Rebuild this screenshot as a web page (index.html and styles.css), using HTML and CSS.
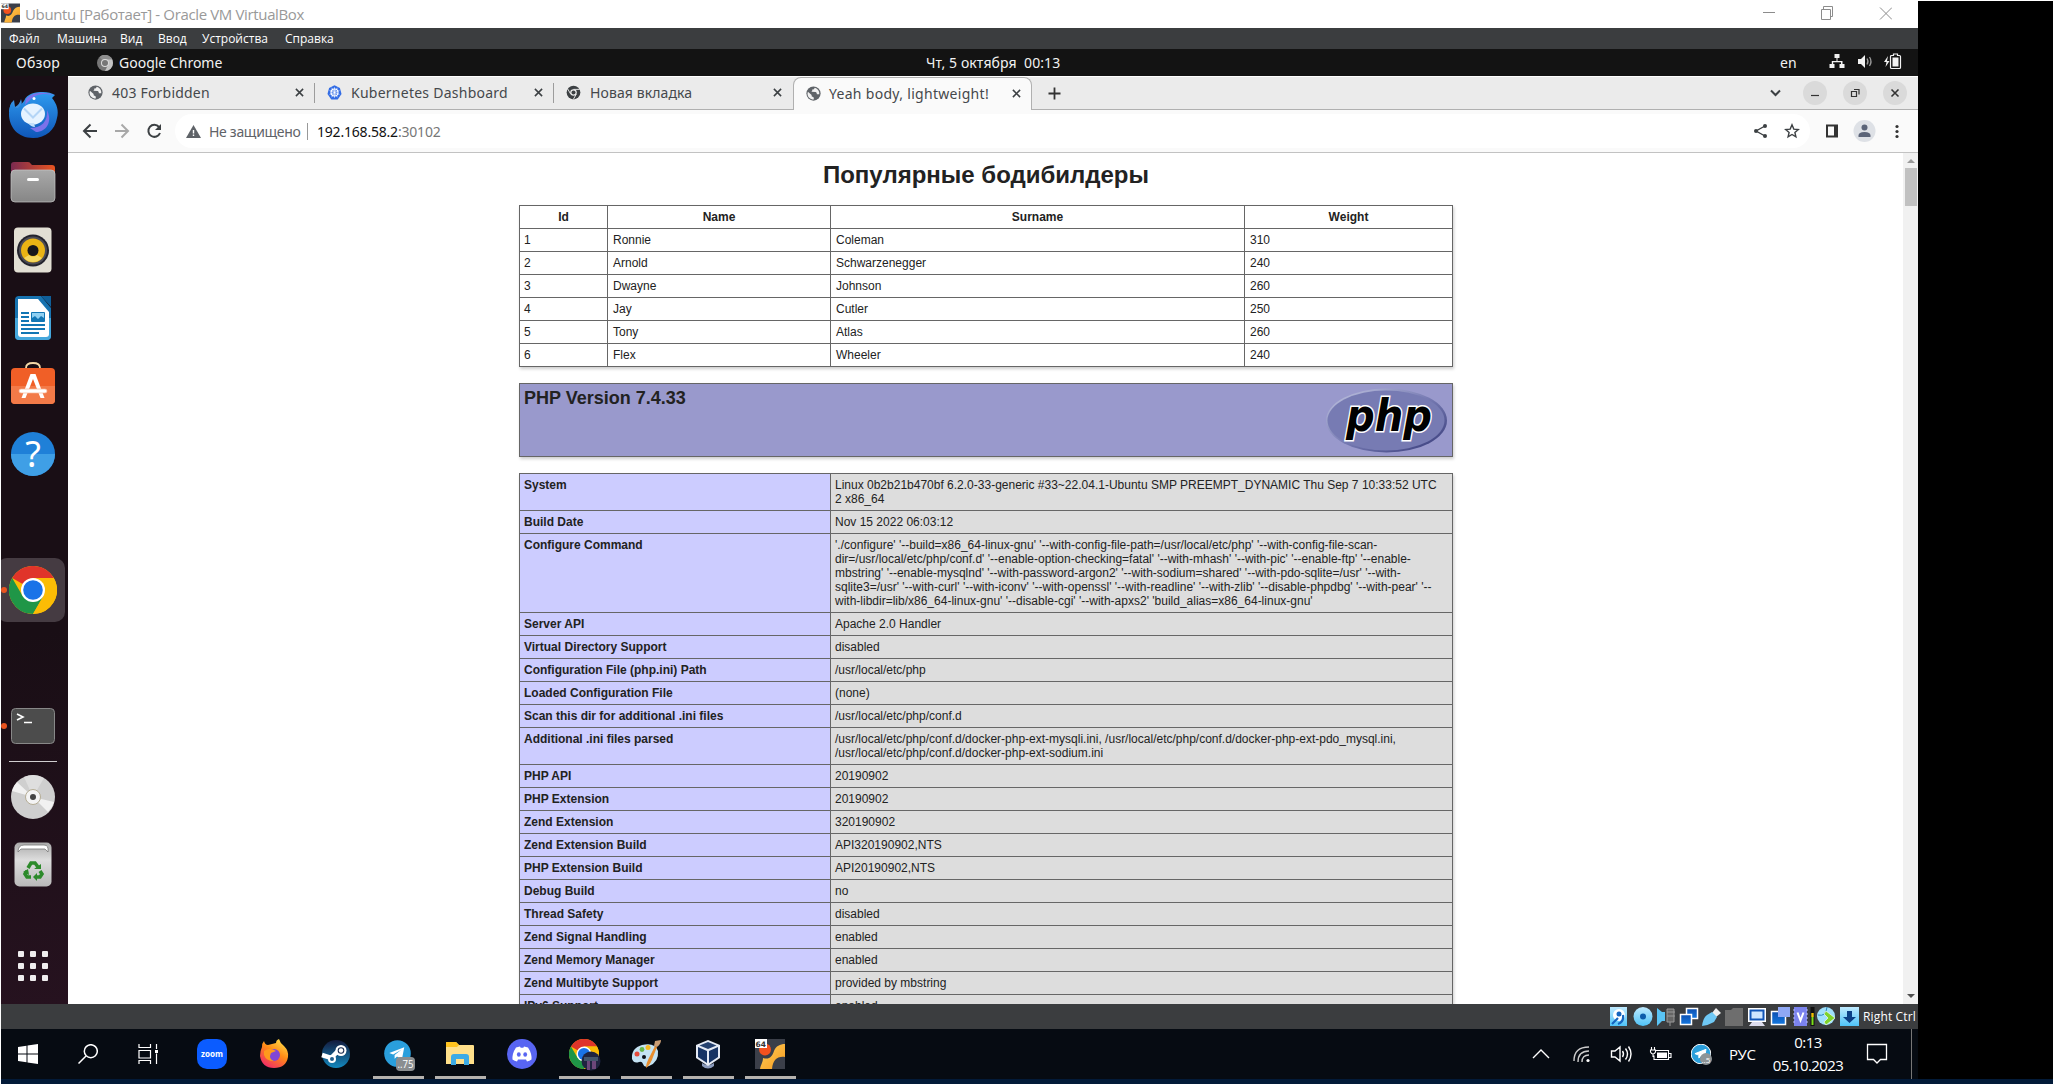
FILE: index.html
```html
<!DOCTYPE html>
<html lang="ru">
<head>
<meta charset="utf-8">
<title>Ubuntu [Работает] - Oracle VM VirtualBox</title>
<link rel="stylesheet" href="styles.css">
</head>
<body>
<svg class="defs" width="0" height="0">
  <defs>
    <linearGradient id="gBlue" x1="0" y1="0" x2="0" y2="1"><stop offset="0" stop-color="#2f9cf0"/><stop offset="1" stop-color="#0f56b8"/></linearGradient>
    <linearGradient id="gGrey" x1="0" y1="0" x2="0" y2="1"><stop offset="0" stop-color="#a9a9a9"/><stop offset="1" stop-color="#868686"/></linearGradient>
    <linearGradient id="gFold" x1="0" y1="0" x2="1" y2="0"><stop offset="0" stop-color="#7a2a50"/><stop offset="1" stop-color="#e95420"/></linearGradient>
    <linearGradient id="gTrash" x1="0" y1="0" x2="0" y2="1"><stop offset="0" stop-color="#aaa"/><stop offset="0.4" stop-color="#ddd"/><stop offset="1" stop-color="#b9b9b9"/></linearGradient>
    <linearGradient id="gFire" x1="0.8" y1="0" x2="0.2" y2="1"><stop offset="0" stop-color="#ffe14a"/><stop offset="0.45" stop-color="#ff8a16"/><stop offset="1" stop-color="#f0246e"/></linearGradient>
    <linearGradient id="gSteam" x1="0" y1="0" x2="0" y2="1"><stop offset="0" stop-color="#141a3c"/><stop offset="1" stop-color="#1389bf"/></linearGradient>
    <linearGradient id="gVb" x1="0" y1="0" x2="0" y2="1"><stop offset="0" stop-color="#bfeaff"/><stop offset="1" stop-color="#4fc3f7"/></linearGradient>
    <linearGradient id="gNet" x1="0" y1="0" x2="0" y2="1"><stop offset="0" stop-color="#0d4fb0"/><stop offset="1" stop-color="#1478e0"/></linearGradient>
    <linearGradient id="gOr" x1="0" y1="0" x2="1" y2="1"><stop offset="0" stop-color="#ffcf5a"/><stop offset="1" stop-color="#f79a1e"/></linearGradient>
    <linearGradient id="gRim" x1="0" y1="0" x2="1" y2="1"><stop offset="0.15" stop-color="#aeb2d5"/><stop offset="0.5" stop-color="#777bb3"/><stop offset="0.85" stop-color="#484c89"/></linearGradient>
    <symbol id="globe" viewBox="0 0 16 16"><circle cx="8" cy="8" r="7.6" fill="#5f6368"/><path d="M2 6.2 6 9.5v1.3l2.3 1.5v2.2C4.5 14.6 1.6 11.700 1.600 8zM9.500 1.800 8 3.600H6.600v1.700l-1 .8 4.800.2c1 .3 1.200 1.700 1.200 2.500h2.600c.3-3.400-1.600-6-4.700-7z" fill="#f1f1f1"/></symbol>
    <symbol id="chrome" viewBox="0 0 48 48"><circle cx="24" cy="24" r="24" fill="#fbbc05"/><path d="M24 24 3.200 12A24 24 0 0 1 44.800 12H24z" fill="#e0342a"/><path d="M24 48A24 24 0 0 1 3.200 12L13.600 30 24 36l10.400-6z" fill="#1f9647"/><path d="M44.800 12A24 24 0 0 1 24 48l10.400-18L36 18 24 12z" fill="#fbbc05"/><circle cx="24" cy="24" r="12" fill="#fff"/><circle cx="24" cy="24" r="9.800" fill="#1a73e8"/></symbol>
    <symbol id="chromeGrey" viewBox="0 0 48 48"><circle cx="24" cy="24" r="22" fill="currentColor"/><path d="M24 14h20M15 29 5 12M33 29 23 47" stroke="#ebebeb" stroke-width="3"/><circle cx="24" cy="24" r="10.500" fill="#ebebeb"/><circle cx="24" cy="24" r="6.500" fill="currentColor"/></symbol>
    <symbol id="close" viewBox="0 0 10 10"><path d="M1 1l8 8M9 1 1 9" stroke="#3c4043" stroke-width="1.700"/></symbol>
    <symbol id="vm64" viewBox="0 0 30 30"><path d="M0 0h30v30H0z" fill="#3b3f49"/><path d="M30 5v13C22 17 18 21 17 30H5C6 25 8 23 8 19c6 2 9-1 11-7 2-5 6-7 11-7z" fill="url(#gOr)"/><circle cx="10" cy="10.500" r="6" fill="#f4511e"/><path d="M0 0h12v9H0z" fill="#fff"/><text x="0.600" y="7.500" class="t64">64</text></symbol>
    <symbol id="plane" viewBox="0 0 28 28"><circle cx="14" cy="14" r="13.800" fill="#2a9fdc"/><path d="M5.500 13.500 21 7.500l-2.500 13-5-3.500-2.500 2.500v-4l7-5.500-8.500 5z" fill="#fff"/></symbol>
  </defs>
</svg>

<div class="screen">
  <div class="vm">
    <header class="titlebar">
      <svg class="app" width="19" height="20"><use href="#vm64"/></svg>
      <span class="wtitle">Ubuntu [Работает] - Oracle VM VirtualBox</span>
      <svg class="winbtns" width="130" height="20" viewBox="0 0 130 20" fill="none" stroke="#8c8c8c"><path d="M1 9.500h12"/><path d="M59.500 6.500h9v10h-9zM61.500 6v-2.500h9v10h-2"/><path d="M118 4.500l12 12M130 4.500l-12 12"/></svg>
    </header>
    <nav class="menubar"><span class="m1">Файл</span><span class="m2">Машина</span><span class="m3">Вид</span><span class="m4">Ввод</span><span class="m5">Устройства</span><span class="m6">Справка</span></nav>

    <div class="topbar">
      <span class="ov">Обзор</span>
      <svg class="tc" width="16" height="16" viewBox="0 0 16 16"><circle cx="8" cy="8" r="8" fill="#777"/><path d="M8 8l-5.500-6A8 8 0 0 1 16 8z" fill="#8e8e8e"/><path d="M16 8a8 8 0 0 1-8 8l4-8-2-3.500h5z" fill="#c4c4c4"/><circle cx="8" cy="8" r="4" fill="#ddd"/><circle cx="8" cy="8" r="3" fill="#777"/></svg>
      <span class="gc">Google Chrome</span>
      <span class="clock">Чт, 5 октября&nbsp; 00:13</span>
      <span class="lang">en</span>
      <svg class="sys" width="74" height="18" viewBox="0 0 74 18" fill="#f2f2f2"><path d="M5.500 1h5v4h-2v3h5v3h2v4h-5v-4h1.500V9.200H4.200V11h1.300v4H.5v-4h2.300V8h4.700V5h-2z"/><path d="M29 6h3l4-4v13l-4-4h-3z"/><path d="M38 5.500q2 3 0 6M40.500 4q3 4.500 0 9" fill="none" stroke="#999" stroke-width="1.300"/><path d="M59 3l-4 6h2.500L56.500 14l4-6H58z"/><path d="M64.500 2.500v-1.500h4v1.500h2q1 0 1 1v11q0 1-1 1h-8q-1 0-1-1v-11q0-1 1-1z" fill="none" stroke="#f2f2f2" stroke-width="1.200"/><path d="M63.500 4.500h6v9h-6z"/></svg>
    </div>

    <div class="desktop">
      <aside class="dock">
        <svg width="67" height="928" viewBox="1 76 67 928">
          <g><path d="M9 112q1-9 5-12l1 7q5-3 6-8 2 6-1 12z" fill="#3a8fe0"/><path d="M24 101c3-8 12-9 19-9q7 0 12 3l-3 3c5 6 7 13 5 20-2 12-11 20-24 20-15 0-24-11-24-24 0-5 1-9 3-12 1 4 3 6 6 6z" fill="url(#gBlue)"/><path d="M26 99c6-7 17-8 28-4l-8-1c-8 0-12 2-16 6l-5 5z" fill="#7b72ea"/><path d="M30 128c12 0 18-7 17-18 6 12-1 22-11 22z" fill="#7b72ea"/><ellipse cx="33" cy="114" rx="12" ry="10.500" fill="#e6f3ff"/><path d="M24 108.500l9 9 9-9" fill="none" stroke="#b4d5f6" stroke-width="2"/><path d="M28 123q3 4 7 4l-1-4z" fill="#c4e0fa"/><circle cx="34" cy="98.500" r="1.500" fill="#fff"/></g>
          <g><path d="M11 170v-5q0-3 3-3h14q2 0 3 2l1 1h20q3 0 3 3v8H11z" fill="url(#gFold)"/><rect x="11" y="170" width="44" height="32" rx="4" fill="url(#gGrey)" stroke="#c5c5c5" stroke-width=".7"/><rect x="27" y="178" width="12" height="3" rx="1.500" fill="#fff"/></g>
          <g><rect x="14" y="227.500" width="37.500" height="45" rx="4" fill="#e2dfd4"/><circle cx="33" cy="250.500" r="16" fill="#23232d"/><circle cx="33" cy="250.500" r="14" fill="#4c4c55"/><circle cx="33" cy="250.500" r="12" fill="#eab414"/><circle cx="33" cy="250.500" r="5.500" fill="#17171b"/><path d="M24 258a12 12 0 0 0 18 0l-5-3a6 6 0 0 1-8 0z" fill="#f5d860"/></g>
          <g><path d="M19 296h22l10 12v28q0 4-4 4H19q-4 0-4-4v-36q0-4 4-4z" fill="#1773b0"/><path d="M15 318h36v18q0 4-4 4H19q-4 0-4-4z" fill="#45a7dc"/><path d="M41 296h10v11z" fill="#0f5f99"/><path d="M18 299h20l11 13v22q0 3-3 3H21q-3 0-3-3z" fill="#fff"/><path d="M21 313h8M21 317h8M21 321h8M21 325h24M21 329h24M21 333h18" stroke="#1276b4" stroke-width="2"/><path d="M31.500 312.500h13v9h-13z" fill="#8fd0f2" stroke="#1276b4"/><path d="M32 321l0-3 3-2 3 3 3-3 3 2v3z" fill="#1276b4"/></g>
          <g><path d="M26 370v-2q0-5 7-5t7 5v2" fill="none" stroke="#f4d9a8" stroke-width="1.800"/><rect x="11" y="368" width="44" height="36" rx="4" fill="#f05f27"/><path d="M11 386h44v14q0 4-4 4H15q-4 0-4-4z" fill="#f37a48"/><path d="M30.500 374h5l9 24h-4l-7.500-19-7.500 19h-4z" fill="#fff"/><rect x="19" y="389" width="28" height="4" rx="2" fill="#fff" stroke="#f6b497" stroke-width=".7"/></g>
          <g><circle cx="33" cy="454" r="22" fill="#1f80d8"/><path d="M11 454h44a22 22 0 0 1-44 0z" fill="#3f9fe6"/><text x="33" y="467" class="help">?</text></g>
          <rect x="-3" y="558" width="68" height="64" rx="10" fill="#453b42"/>
          <circle cx="4" cy="590" r="3" fill="#e95420"/><use href="#chrome" x="9" y="566" width="48" height="48"/>
          <circle cx="4" cy="726" r="3" fill="#e95420"/>
          <g><rect x="11.500" y="708.500" width="43" height="35" rx="4" fill="#4c4c4c" stroke="#888"/><path d="M17 714l6 3-6 3M24 722.500h8" fill="none" stroke="#fff" stroke-width="1.600"/></g>
          <path d="M9 761.500h48" stroke="#d0cdcf"/>
          <g><circle cx="33" cy="797" r="22" fill="#cfcfcf"/><path d="M33 797L12 791a22 22 0 0 1 5-9zM33 797l21 5a22 22 0 0 1-6 10z" fill="#f1f1f1"/><path d="M33 797l-9-20a22 22 0 0 1 20 1z" fill="#dedede"/><circle cx="33" cy="797" r="7.500" fill="#f4f4f4" stroke="#b5ad95"/><circle cx="33" cy="797" r="3" fill="#444"/></g>
          <g><rect x="14.500" y="842.500" width="37" height="44" rx="5" fill="url(#gTrash)"/><path d="M18 852q0-7 6-7h20q5 0 4 7l-3-3H21z" fill="#fff" stroke="#777" stroke-width=".8"/><path d="M28 868l3-5h4l3 4M40 871l2 3-2 3h-5M31 877h-4l-2-3 2-3" fill="none" stroke="#2c8a2a" stroke-width="3.500"/><path d="M34 869h7v-5zM37 873v8l-4-4zM23 872l5-3 1 6z" fill="#2c8a2a"/></g>
          <g fill="#efedee"><rect x="18" y="951" width="6" height="6" rx="1"/><rect x="30" y="951" width="6" height="6" rx="1"/><rect x="42" y="951" width="6" height="6" rx="1"/><rect x="18" y="963" width="6" height="6" rx="1"/><rect x="30" y="963" width="6" height="6" rx="1"/><rect x="42" y="963" width="6" height="6" rx="1"/><rect x="18" y="975" width="6" height="6" rx="1"/><rect x="30" y="975" width="6" height="6" rx="1"/><rect x="42" y="975" width="6" height="6" rx="1"/></g>
        </svg>
      </aside>

      <main class="browser">
        <div class="tabs">
          <div class="tab"><svg width="15" height="15"><use href="#globe"/></svg><span class="tt t1">403 Forbidden</span><svg class="x" width="9" height="9"><use href="#close"/></svg></div>
          <div class="tab"><svg width="15" height="15" viewBox="0 0 16 16"><path d="M8 .3l5.800 2.800L15.500 9.500 11.400 15.500H4.600L.5 9.500 2.200 3.100z" fill="#326ce5"/><circle cx="8" cy="8" r="3.700" fill="none" stroke="#fff" stroke-width="1.200"/><path d="M8 2.500v11M2.800 6l10.400 4M13.200 6 2.800 10M5 13l6-10M11 13 5 3" stroke="#fff" stroke-width=".7"/></svg><span class="tt t2">Kubernetes Dashboard</span><svg class="x" width="9" height="9"><use href="#close"/></svg></div>
          <div class="tab"><svg class="cg" width="15" height="15"><use href="#chromeGrey"/></svg><span class="tt t3">Новая вкладка</span><svg class="x" width="9" height="9"><use href="#close"/></svg></div>
          <div class="tab active"><svg width="15" height="15"><use href="#globe"/></svg><span class="tt t4">Yeah body, lightweight!</span><svg class="x" width="9" height="9"><use href="#close"/></svg></div>
          <svg class="plus" width="13" height="13" viewBox="0 0 13 13"><path d="M6.500.5v12M.5 6.500h12" stroke="#333" stroke-width="1.800"/></svg>
          <svg class="ctl" width="140" height="24" viewBox="0 0 140 24" fill="none"><path d="M2 9.500l4.500 4.500L11 9.500" stroke="#3c4043" stroke-width="2"/><g fill="#dadada"><circle cx="46" cy="12" r="12"/><circle cx="86" cy="12" r="12"/><circle cx="126" cy="12" r="12"/></g><g stroke="#333" stroke-width="1.200"><path d="M42 14.500h8"/><path d="M82.500 10.500h5v5h-5zM85 8.500h5v5"/><path d="M122.500 8.500l7 7M129.500 8.500l-7 7" stroke-width="1.600"/></g></svg>
        </div>
        <div class="toolbar">
          <svg class="navs" width="80" height="18" viewBox="0 0 80 18" fill="none" stroke-width="2"><path d="M15 9H2M8.500 2.500 2 9l6.500 6.500" stroke="#3c4043"/><path d="M33 9h13M39.500 2.500 46 9l-6.500 6.500" stroke="#a8a8a8"/><path d="M77 5A6 6 0 1 0 78 11" stroke="#3c4043"/><path d="M79 2v6h-6z" fill="#3c4043"/></svg>
          <div class="omni">
            <svg class="warn" width="15" height="13" viewBox="0 0 15 13"><path d="M7.500 0 15 13H0z" fill="#5f6368"/><path d="M7.500 5v3.500M7.500 9.500v1.500" stroke="#fff" stroke-width="1.400"/></svg>
            <span class="ns">Не защищено</span><i class="bar"></i><span class="ip">192.168.58.2<b>:30102</b></span>
            <svg class="oi" width="48" height="16" viewBox="0 0 48 16" fill="none" stroke="#3c4043" stroke-width="1.400"><path d="M12 3 3 8l9 5"/><g fill="#3c4043" stroke="none"><circle cx="12" cy="3" r="2"/><circle cx="3" cy="8" r="2"/><circle cx="12" cy="13" r="2"/></g><path d="M39 1.800l1.800 4.300 4.500.4-3.400 3 1 4.400L39 11.500l-3.900 2.400 1-4.400-3.400-3 4.500-.4z"/></svg>
          </div>
          <svg class="ti" width="80" height="24" viewBox="0 0 80 24"><path d="M3 6.500h10v11H3z" fill="none" stroke="#333" stroke-width="2"/><path d="M10 6h4v12h-4z" fill="#333"/><circle cx="40.500" cy="12" r="11" fill="#dee1e6"/><circle cx="40.500" cy="8.500" r="3" fill="#5b6478"/><path d="M34.500 18v-1.500q0-3.500 6-3.500t6 3.500V18z" fill="#5b6478"/><g fill="#333"><circle cx="73" cy="7.500" r="1.600"/><circle cx="73" cy="12.500" r="1.600"/><circle cx="73" cy="17.500" r="1.600"/></g></svg>
        </div>

        <div class="view">
          <div class="page">
            <h1>Популярные бодибилдеры</h1>
            <table class="people">
              <colgroup><col class="c1"><col class="c2"><col class="c3"><col></colgroup>
              <tr><th>Id</th><th>Name</th><th>Surname</th><th>Weight</th></tr>
              <tr><td>1</td><td>Ronnie</td><td>Coleman</td><td>310</td></tr>
              <tr><td>2</td><td>Arnold</td><td>Schwarzenegger</td><td>240</td></tr>
              <tr><td>3</td><td>Dwayne</td><td>Johnson</td><td>260</td></tr>
              <tr><td>4</td><td>Jay</td><td>Cutler</td><td>250</td></tr>
              <tr><td>5</td><td>Tony</td><td>Atlas</td><td>260</td></tr>
              <tr><td>6</td><td>Flex</td><td>Wheeler</td><td>240</td></tr>
            </table>
            <section class="version">
              <h2>PHP Version 7.4.33</h2>
              <svg width="121" height="65" viewBox="0 0 121 65"><ellipse cx="60.500" cy="32.500" rx="60.500" ry="32" fill="url(#gRim)"/><ellipse cx="60" cy="32.500" rx="58.500" ry="30" fill="#777bb3"/><text x="20" y="42.500" class="php" textLength="86" lengthAdjust="spacingAndGlyphs">php</text></svg>
            </section>
            <table class="info">
              <colgroup><col class="k"><col></colgroup>
              <tr><td>System</td><td>Linux 0b2b21b470bf 6.2.0-33-generic #33~22.04.1-Ubuntu SMP PREEMPT_DYNAMIC Thu Sep 7 10:33:52 UTC<br>2 x86_64</td></tr>
              <tr><td>Build Date</td><td>Nov 15 2022 06:03:12</td></tr>
              <tr><td>Configure Command</td><td>'./configure' '--build=x86_64-linux-gnu' '--with-config-file-path=/usr/local/etc/php' '--with-config-file-scan-<br>dir=/usr/local/etc/php/conf.d' '--enable-option-checking=fatal' '--with-mhash' '--with-pic' '--enable-ftp' '--enable-<br>mbstring' '--enable-mysqlnd' '--with-password-argon2' '--with-sodium=shared' '--with-pdo-sqlite=/usr' '--with-<br>sqlite3=/usr' '--with-curl' '--with-iconv' '--with-openssl' '--with-readline' '--with-zlib' '--disable-phpdbg' '--with-pear' '--<br>with-libdir=lib/x86_64-linux-gnu' '--disable-cgi' '--with-apxs2' 'build_alias=x86_64-linux-gnu'</td></tr>
              <tr><td>Server API</td><td>Apache 2.0 Handler</td></tr>
              <tr><td>Virtual Directory Support</td><td>disabled</td></tr>
              <tr><td>Configuration File (php.ini) Path</td><td>/usr/local/etc/php</td></tr>
              <tr><td>Loaded Configuration File</td><td>(none)</td></tr>
              <tr><td>Scan this dir for additional .ini files</td><td>/usr/local/etc/php/conf.d</td></tr>
              <tr><td>Additional .ini files parsed</td><td>/usr/local/etc/php/conf.d/docker-php-ext-mysqli.ini, /usr/local/etc/php/conf.d/docker-php-ext-pdo_mysql.ini,<br>/usr/local/etc/php/conf.d/docker-php-ext-sodium.ini</td></tr>
              <tr><td>PHP API</td><td>20190902</td></tr>
              <tr><td>PHP Extension</td><td>20190902</td></tr>
              <tr><td>Zend Extension</td><td>320190902</td></tr>
              <tr><td>Zend Extension Build</td><td>API320190902,NTS</td></tr>
              <tr><td>PHP Extension Build</td><td>API20190902,NTS</td></tr>
              <tr><td>Debug Build</td><td>no</td></tr>
              <tr><td>Thread Safety</td><td>disabled</td></tr>
              <tr><td>Zend Signal Handling</td><td>enabled</td></tr>
              <tr><td>Zend Memory Manager</td><td>enabled</td></tr>
              <tr><td>Zend Multibyte Support</td><td>provided by mbstring</td></tr>
              <tr><td>IPv6 Support</td><td>enabled</td></tr>
            </table>
          </div>
          <div class="scroll"><i class="up"></i><i class="thumb"></i><i class="down"></i></div>
        </div>
      </main>
    </div>

    <div class="status">
      <svg width="252" height="20" viewBox="0 0 252 20">
        <rect x="0" y="0" width="17" height="19" fill="url(#gVb)"/><circle cx="9" cy="8" r="6" fill="#fff"/><circle cx="9" cy="7" r="2.500" fill="#1565c0"/><path d="M2 17l6-6M8 17q6-2 5-9" stroke="#1565c0" stroke-width="2.200" fill="none"/>
        <circle cx="33" cy="9.500" r="9.500" fill="url(#gVb)"/><circle cx="33" cy="9.500" r="3" fill="#0d5cab"/>
        <path d="M47 1l5 4v9l-5 5zM51 5h4v9h-4z" fill="#59c4f5"/><path d="M57 2h7v13h-7zM60 15v4M57 5h8M57 9h8" fill="#666" stroke="#999"/>
        <path d="M76.500 1.500h11v10h-11z" fill="url(#gNet)" stroke="#fff" stroke-width="1.500"/><path d="M70.500 7.500h11v10h-11z" fill="url(#gNet)" stroke="#fff" stroke-width="1.500"/>
        <path d="M106 1l5 5-5 4-4-4z" fill="#eee"/><path d="M92 19q1-8 5-11l5-3 5 5-3 5q-5 3-12 4z" fill="#6fc8f5"/>
        <path d="M115 3h6l2-2h10v18h-18z" fill="#6e6e6e"/>
        <path d="M138 1h18v14h-18z" fill="#fff"/><path d="M140.500 3.500h13v9h-13z" fill="#cfe6ff" stroke="#1256b8" stroke-width="2"/><path d="M142 15h10l3 4h-16z" fill="#dde"/>
        <path d="M161.500 4.500h14v13h-14z" fill="url(#gNet)" stroke="#fff" stroke-width="1.500"/><path d="M168 0h12v10h-12z" fill="#8fa8f5"/>
        <rect x="184" y="0" width="13" height="19" fill="#7b83ee"/><path d="M183 3h15M183 7h15M183 11h15M183 15h15" stroke="#b8bcff" stroke-dasharray="2 11"/><path d="M187.500 5.500l3 8 3-8" fill="none" stroke="#fff" stroke-width="2"/>
        <path d="M200.500 0h4v19h-4z" fill="#111"/><path d="M201.500 6h2v12h-2z" fill="#7de01a"/><path d="M201.500 6h2v4h-2z" fill="#ffb300"/>
        <ellipse cx="216" cy="9" rx="9" ry="9" fill="#9fe0fb"/><path d="M208 8q8 2 9-8" stroke="#2a85b8" fill="none"/><path d="M216 4l9 7-9 7-2-3 4-4-4-4z" fill="#7fd32b" stroke="#fff" stroke-width=".6"/>
        <rect x="230" y="0" width="19" height="19" fill="url(#gVb)"/><path d="M237 4h5v6h4l-6.500 6L233 10h4z" fill="#0b3f86"/>
      </svg>
      <span>Right Ctrl</span>
    </div>

    <footer class="taskbar">
      <div class="btn w"><svg width="20" height="20" viewBox="0 0 20 20" fill="#fff"><path d="M0 3l8.500-1.200v7.800H0zM9.500 1.600 20 0v9.500H9.500zM0 10.500h8.500v7.800L0 17zM9.500 10.500H20V20L9.500 18.500z"/></svg></div>
      <div class="btn w"><svg width="20" height="20" viewBox="0 0 20 20" fill="none" stroke="#fff" stroke-width="1.500"><circle cx="12.800" cy="7.200" r="6.500"/><path d="M8 12 .5 19.500"/></svg></div>
      <div class="btn w"><svg width="20" height="20" viewBox="0 0 20 20" fill="none" stroke="#fff" stroke-width="1.200"><path d="M1 0v3.500h11.500V0M1 6.500h11.500v7.500H1zM1 20v-3.500h11.500V20M18.500 0v5M18.500 9.500V20"/><path d="M17 6h3v3h-3z" fill="#fff" stroke="none"/></svg></div>
      <div class="btn first"><svg width="30" height="30" viewBox="0 0 30 30"><rect width="30" height="30" rx="10" fill="#0b5cff"/><text x="15" y="17.500" class="zoom" textLength="22" lengthAdjust="spacingAndGlyphs">zoom</text></svg></div>
      <div class="btn"><svg width="30" height="30" viewBox="0 0 30 30"><path d="M3 8q0-4 2-6 1 4 4 4l8-2q0-3 3-4 1 4 5 7 5 5 4 11-2 11-14 11T1 17q0-5 2-9z" fill="url(#gFire)"/><circle cx="15" cy="16" r="6" fill="#8046d6"/><path d="M5 12q6-4 12 0l-5 2q-3 6 3 8-8 0-10-6z" fill="#ff9a1c"/></svg></div>
      <div class="btn"><svg width="30" height="30" viewBox="0 0 30 30"><circle cx="15" cy="15" r="14" fill="url(#gSteam)"/><path d="M1 16l9 3 8-8" fill="none" stroke="#fff" stroke-width="4.500"/><circle cx="20" cy="11.500" r="5.500" fill="#fff"/><circle cx="20" cy="11.500" r="3.300" fill="#1a2c50"/><circle cx="20" cy="11.500" r="2.200" fill="#fff"/><circle cx="11" cy="20" r="4" fill="#fff"/><circle cx="11" cy="20" r="2" fill="#235f8d"/></svg></div>
      <div class="btn run"><svg width="34" height="34" viewBox="-2 -2 34 34"><use href="#plane" x="1" y="1" width="27" height="27"/><rect x="13" y="18" width="19" height="14" rx="4" fill="#8a8e90"/><text x="14.500" y="29" class="badge" textLength="16" lengthAdjust="spacingAndGlyphs">..75</text></svg></div>
      <div class="btn run"><svg width="30" height="30" viewBox="0 0 30 30"><path d="M1 4q0-1 1-1h9l3 3h14q1 0 1 1v18H1z" fill="#ffe08a"/><path d="M1 4q0-1 1-1h9l3 3-2 2H1z" fill="#ffc31f"/><path d="M6 26v-8q0-3 3-3h12q3 0 3 3v8h-5v-6h-8v6z" fill="#3cabe6"/></svg></div>
      <div class="btn"><svg width="30" height="30" viewBox="0 0 30 30"><circle cx="15" cy="15" r="15" fill="#5865f2"/><path d="M9 8.500l4-1 .7 1.300h2.600L17 7.500l4 1q4 6 3.500 12-2 1.500-4.500 2l-1-2h-8l-1 2q-2.500-.5-4.500-2Q5 14.500 9 8.500z" fill="#fff"/><ellipse cx="11.800" cy="15.500" rx="1.900" ry="2.200" fill="#5865f2"/><ellipse cx="18.200" cy="15.500" rx="1.900" ry="2.200" fill="#5865f2"/></svg></div>
      <div class="btn run"><svg width="34" height="34" viewBox="-2 -2 34 34"><use href="#chrome" x="0" y="0" width="30" height="30"/><circle cx="22" cy="22" r="9.500" fill="#1f2440"/><path d="M15 18h14v4H15z" fill="#44566c"/><path d="M18 22h3v9h-3zM23 22h4v8h-4z" fill="#6c477a"/></svg></div>
      <div class="btn run"><svg width="30" height="30" viewBox="0 0 30 30"><path d="M1 20Q0 9 11 6q13-3 16 6 1 11-9 15-5 2-6-2-1-3-4-2-5 2-7-3z" fill="#c4e3f3"/><circle cx="6" cy="15" r="2.500" fill="#e74c3c"/><circle cx="11" cy="10.500" r="2.400" fill="#65b84a"/><circle cx="17" cy="8.500" r="2.500" fill="#f5b921"/><circle cx="13" cy="18" r="2" fill="#0a0f16"/><path d="M15 29q0-5 4-12l5-10 2 1-4 10q-2 7-7 11z" fill="#e88e2e"/><path d="M23 7l1-5 6-1q0 4-4 7z" fill="#c99c73"/></svg></div>
      <div class="btn run"><svg width="30" height="30" viewBox="0 0 30 30"><path d="M9 24q6 4 12 0v3q-6 5-12 0z" fill="#8a9bbd"/><path d="M15 1l12 5v13l-12 8L3 19V6z" fill="#e5ebf5"/><path d="M15 3l8.500 3.500L15 10 6.500 6.500z" fill="#24416f"/><path d="M5 8l9 4v12l-9-6zM25 8l-9 4v12l9-6z" fill="#173465"/></svg></div>
      <div class="btn run"><svg width="30" height="30"><use href="#vm64"/></svg></div>
      <div class="tray">
        <svg width="190" height="30" viewBox="0 0 190 30" fill="none" stroke="#fff" stroke-width="1.400"><path d="M1 19l8-8 8 8"/><g stroke="#ccc"><path d="M42 22Q42 8 57 8M46 23q0-11 11-11M50 23q0-7 7-7"/></g><circle cx="56" cy="21.500" r="1.600" fill="#fff" stroke="none"/><path d="M79.500 12h3.500l5-4v14l-5-4h-3.500zM90.500 12q2 3 0 6M93.500 9.500q4 5.500 0 11M96.500 7.500q5 7.500 0 15"/><path d="M124 11.500h12.500v9H122v-4M137 14.500h2v4h-2M119.500 8v3M122.500 8v3M118.500 11h5v2q-1 2-2.500 2t-2.500-2zM121 15v3" stroke-width="1.100"/><path d="M125 13.500h10v5.500h-10z" fill="#fff" stroke="none"/><use href="#plane" x="159" y="5" width="20" height="20"/><circle cx="174" cy="20" r="6" fill="#8d9497" stroke="none"/><text x="169.500" y="23.500" class="b5">..5</text></svg>
        <span class="rus">РУС</span>
        <span class="time"><span>0:13</span><span>05.10.2023</span></span>
        <svg class="notif" width="22" height="22" viewBox="0 0 22 22"><path d="M1.500 1.500h19v15h-6l-3.500 3.500-3.500-3.500h-6z" fill="none" stroke="#fff" stroke-width="1.300"/></svg>
        <i class="peek"></i>
      </div>
    </footer>
  </div>
  <div class="void"></div>
</div>
<div class="strip"></div>
</body>
</html>
```
FILE: styles.css
```css
* { box-sizing: border-box; }
body { margin: 0; width: 2054px; height: 1084px; overflow: hidden; background: #fff; padding: 0 1px; font-family: "Noto Sans", "Liberation Sans", sans-serif; }
svg { display: block; flex: none; }
span { white-space: pre; }
.defs { position: absolute; }
.screen { display: flex; height: 1079px; }
.vm { width: 1917px; display: flex; flex-direction: column; }
.void { flex: 1; margin-top: 1px; background: #000; }
.strip { height: 5px; background: #021a38; }
.t64 { font: bold 7.5px "DejaVu Sans", sans-serif; fill: #333; }

.titlebar { height: 28px; display: flex; align-items: center; background: #fff; }
.app { margin-top: -2px; }
.wtitle { margin-left: 5px; margin-top: -1px; font: 15px/20px "Open Sans", sans-serif; letter-spacing: -.36px; color: #999; }
.winbtns { margin-left: auto; margin-right: 26px; margin-top: -2px; }

.menubar { height: 21px; display: flex; background: #3b3d3f; color: #fff; font: 12px/21px "Open Sans", sans-serif; padding-left: 8px; }
.m1 { width: 48px; } .m2 { width: 63px; } .m3 { width: 38px; } .m4 { width: 44px; } .m5 { width: 83px; }

.topbar { height: 27px; background: #131313; color: #f2f2f2; display: flex; align-items: center; font-size: 14px; position: relative; }
.ov { margin-left: 15px; width: 80px; letter-spacing: .3px; }
.tc { margin-right: 6px; margin-left: 1px; }
.gc { width: 110px; }
.clock { position: absolute; left: 925px; letter-spacing: .08px; }
.lang { margin-left: auto; width: 49px; }
.sys { margin-right: 15px; margin-top: -1px; }

.desktop { display: flex; height: 928px; }
.dock { width: 67px; background: linear-gradient(170deg, #190e15 60%, #26121f); }
.help { font: 36px "Noto Sans", sans-serif; fill: #fff; text-anchor: middle; }

.browser { flex: 1; display: flex; flex-direction: column; min-width: 0; }
.tabs { height: 34px; background: #ebebeb; border-top: 1px solid #fff; border-bottom: 1px solid #b0b0b0; display: flex; align-items: center; padding-left: 8px; }
.tab { width: 239px; height: 20px; display: flex; align-items: center; padding: 0 10px 1px 12px; border-right: 1px solid #9c9c9c; color: #45484b; font-size: 14px; }
.tab:nth-child(3) { border-right-color: transparent; }
.tt { margin-left: 9px; }
.t1 { letter-spacing: .2px; }
.t2 { letter-spacing: .25px; }
.t3 { letter-spacing: .1px; }
.t4 { letter-spacing: .3px; margin-left: 8px; }
.x { margin-left: auto; }
.cg { color: #3c4043; }
.active { height: 34px; align-self: flex-start; margin-bottom: -1px; background: #fafafa; border: 1px solid #b0b0b0; border-bottom: 0; border-radius: 8px 8px 0 0; padding-bottom: 3px; }
.plus { margin-left: 16px; }
.ctl { margin-left: auto; margin-right: 9px; }

.toolbar { height: 43px; background: #fafafa; border-bottom: 1px solid #c2c2c2; display: flex; align-items: center; padding-left: 14px; }
.navs { margin-right: 13px; }
.omni { width: 1635px; height: 34px; border-radius: 17px; background: #fff; display: flex; align-items: center; padding: 0 9px 0 11px; font-size: 14px; color: #5f6368; }
.ns { margin-left: 8px; width: 98px; letter-spacing: -.3px; }
.bar { width: 1px; height: 17px; background: #999; margin-right: 9px; }
.ip { color: #111; letter-spacing: -.2px; }
.ip b { font-weight: 400; color: #777; }
.oi { margin-left: auto; }
.ti { margin-left: 14px; }

.view { height: 851px; display: flex; overflow: hidden; background: #fff; }
.page { width: 1835px; padding: 0 450px 0 451px; font-family: "Liberation Sans", Arial, sans-serif; color: #222; }
.page h1 { margin: 8px 0 0; height: 44px; font-size: 24px; line-height: 28px; text-align: center; }
table { width: 934px; table-layout: fixed; border-collapse: collapse; box-shadow: 1px 2px 3px rgba(0,0,0,.2); font-size: 12px; line-height: 14px; }
th, td { border: 1px solid #666; padding: 4px 5px; vertical-align: baseline; white-space: nowrap; }
td { text-align: left; }
td:first-child, .info td { padding-left: 4px; }
.c1 { width: 88px; } .c2 { width: 223px; } .c3 { width: 414px; }
.k { width: 311px; }
.version { width: 934px; height: 74px; margin: 16px 0; border: 1px solid #666; background: #99c; box-shadow: 1px 2px 3px rgba(0,0,0,.2); display: flex; justify-content: space-between; padding: 4px 5px 0 4px; }
.version h2 { margin: 0; font-size: 18px; line-height: 20px; }
.php { font: italic bold 44px "DejaVu Sans", sans-serif; fill: #000; stroke: #fff; stroke-width: 3px; paint-order: stroke; }
.info td:first-child { background: #ccf; font-weight: bold; }
.info td:last-child { background: #ddd; }
.scroll { width: 15px; background: #f1f1f1; display: flex; flex-direction: column; align-items: center; }
.up { border: 4px solid transparent; border-top: 0; border-bottom: 4px solid #999; margin-top: 6px; }
.thumb { width: 12px; height: 38px; background: #c1c1c1; margin-top: 5px; }
.down { border: 4px solid transparent; border-bottom: 0; border-top: 4px solid #505050; margin-top: auto; margin-bottom: 6px; }

.status { height: 25px; background: #3b3d3f; display: flex; justify-content: flex-end; align-items: center; color: #fff; font: 12px/20px "Open Sans", sans-serif; }
.status svg { margin-right: 1px; }
.status span { width: 55px; letter-spacing: .15px; }

.taskbar { height: 50px; background: #060b12; display: flex; color: #fff; }
.btn { width: 62px; height: 50px; display: flex; align-items: center; justify-content: center; }
.btn.w { width: 60px; }
.btn.w:first-child { width: 54px; }
.w + .w { margin-left: 3px; width: 60px; }
.w + .w + .w { margin-left: 0; }
.btn.first { margin-left: 3px; }
.run { background: linear-gradient(#b5b2ae, #b5b2ae) 50% 100% / 51px 3px no-repeat; }
.zoom { font: bold 8px "Open Sans", sans-serif; fill: #fff; text-anchor: middle; }
.badge { font: 10px "Open Sans", sans-serif; fill: #fff; }
.b5 { font: 8px "Open Sans", sans-serif; fill: #fff; stroke: none; }
.tray { margin-left: auto; display: flex; align-items: center; }
.rus { font: 15px/20px "Open Sans", sans-serif; width: 30px; margin-left: 7px; letter-spacing: -.4px; }
.time { display: flex; flex-direction: column; align-items: center; font: 15px/23px "Open Sans", sans-serif; width: 74px; margin-left: 12px; letter-spacing: -.6px; }
.notif { margin-left: 21px; }
.peek { width: 1px; height: 50px; background: #777; margin: 0 6px 0 23px; }
```
